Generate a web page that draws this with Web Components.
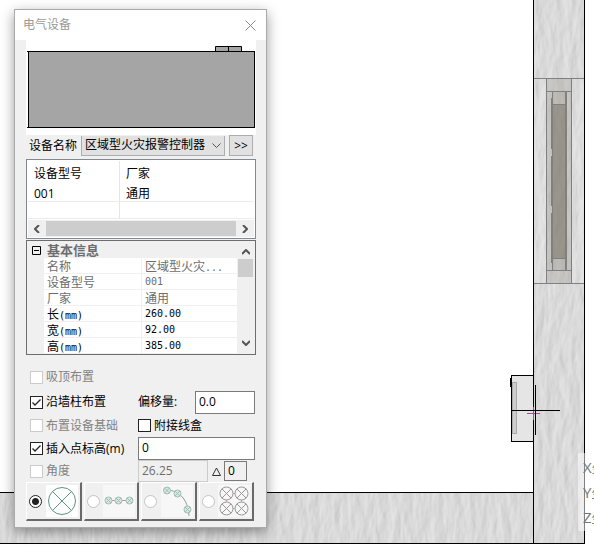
<!DOCTYPE html>
<html lang="zh-CN">
<head>
<meta charset="utf-8">
<title>电气设备</title>
<style>
body { margin: 0; background: #fff; font: 12px/16px "Open Sans", "Noto Sans CJK SC", sans-serif; color: #000; }
</style>
</head>
<body>
<plan-canvas>
  <coord-readout slot="overlay"></coord-readout>
  <tool-dialog slot="overlay" heading="电气设备">
    <device-preview></device-preview>
    <device-picker></device-picker>
    <device-list></device-list>
    <property-grid></property-grid>
    <placement-options></placement-options>
    <layout-modes></layout-modes>
  </tool-dialog>
</plan-canvas>
<script>
function define(name, html) {
  const t = document.createElement('template');
  t.innerHTML = '<style>:host,*{box-sizing:border-box}input,select,button{font:inherit;color:inherit;margin:0;border-radius:0}</style>' + html;
  customElements.define(name, class extends HTMLElement {
    constructor() {
      super();
      this.attachShadow({ mode: 'open' }).append(t.content.cloneNode(true));
    }
    connectedCallback() {
      const h = this.shadowRoot.querySelector('[data-heading]');
      if (h) h.textContent = this.getAttribute('heading');
    }
  });
}

define('plan-canvas', `
<style>
:host { display: block; position: relative; min-height: 100vh; overflow: hidden; }
.plan { position: absolute; left: 0; top: 0; }
</style>
<svg class="plan" width="594" height="550" viewBox="0 0 594 550" aria-hidden="true">
  <defs>
    <filter id="plaster" x="0" y="0" width="100%" height="100%" color-interpolation-filters="sRGB">
      <feTurbulence type="fractalNoise" baseFrequency="0.12 0.04" numOctaves="3" seed="4" result="n"/>
      <feColorMatrix in="n" values="0 0 0 0 0  0 0 0 0 0  0 0 0 0 0  1 0 0 0 0"/>
      <feDiffuseLighting surfaceScale="0.5" diffuseConstant="1" lighting-color="#eeeeee">
        <feDistantLight azimuth="200" elevation="66"/>
      </feDiffuseLighting>
    </filter>
  </defs>
  <rect x="533" y="0" width="51" height="543" filter="url(#plaster)"/>
  <rect x="0" y="492" width="533" height="51" filter="url(#plaster)"/>
  <g fill="none" stroke="#000">
    <path d="M533.5 0V543M584.5 0V543.5M0 492.5H533M0 543.5H585"/>
  </g>
  <rect x="534" y="79" width="50" height="204" fill="#fff" opacity=".12"/>
  <g fill="#8a8074">
    <rect x="547" y="79" width="25" height="204" opacity=".28"/>
    <rect x="553" y="92" width="13" height="178" opacity=".16"/>
    <rect x="553" y="105" width="13" height="153" fill="#665f50" opacity=".42"/>
  </g>
  <path d="M534 78.500H584M534 283.500H584M533.500 79V283M584.500 79V283M546.500 79V283M571.500 79V283M547 91.500H571M547 270.500H571M552 104.500H566M552 258.500H566" stroke="#808080" fill="none"/>
  <path d="M533.500 79V283M584.500 79V283" stroke="#000"/>
  <path d="M552.500 92V270" stroke="#808080"/>
  <path d="M566 92V270" stroke="#808080" stroke-width="2"/>
  <path d="M551.500 98V149M551.500 156V206M551.500 213V263" stroke="#808080"/>
  <rect x="511.500" y="375.500" width="22" height="66" fill="#e5e5e5" stroke="#000"/>
  <rect x="512.500" y="382.500" width="4" height="51" fill="#cdcdcd" stroke="#aaa"/>
  <path d="M511 378V387" stroke="#000" stroke-width="2"/>
  <path d="M527 413.500H540M533.500 407V420" stroke="#a349a4"/>
  <path d="M512 410.500H560M535.500 385V435" stroke="#000"/>
</svg>
<slot name="overlay"></slot>`);

define('coord-readout', `
<style>
:host { position: absolute; left: 578px; top: 453px; width: 120px; padding: 2px 5px 1px; background: #ffffff80; color: #777; font-size: 15px; line-height: 25px; }
div { white-space: nowrap; }
</style>
<div>X坐标</div><div>Y坐标</div><div>Z坐标</div>`);

define('tool-dialog', `
<style>
:host { position: absolute; left: 14px; top: 9px; width: 253px; padding-bottom: 6px; background: #f0f0f0; border: 1px solid #aaa; box-shadow: 0 4px 12px #0006; }
header { display: flex; align-items: center; justify-content: space-between; height: 30px; padding: 0 10px 0 8px; background: #fff; color: #999; }
h1 { margin: 0; font: inherit; }
button { display: flex; padding: 0; border: 0; background: none; color: #888; }
main { padding: 0 10px 0 11px; }
</style>
<header><h1 data-heading></h1>
<button type="button" aria-label="关闭"><svg width="11" height="11"><path d="M.5 .5L10.500 10.500M10.500 .5L.5 10.500" stroke="currentColor"/></svg></button></header>
<main><slot></slot></main>`);

define('device-preview', `
<style>:host { display: block; background: #fff; height: 95px; } svg { display: block; }</style>
<svg width="230" height="95" role="img" aria-label="设备预览">
  <path d="M189.500 11.500V6.500H215.500V11.500M202.500 6V11" fill="#a5a5a5" stroke="#000"/>
  <rect x="2.500" y="11.500" width="226" height="76" fill="#a5a5a5" stroke="#000"/>
  <path d="M1 11.500H3M1 87.500H3" stroke="#000"/>
</svg>`);

define('device-picker', `
<style>
:host { display: flex; align-items: center; gap: 4px; height: 21px; padding-left: 3px; }
.pick { position: relative; flex: 1; }
select { display: block; width: 100%; height: 20px; padding: 0 3px; appearance: none; background: #e1e1e1; border: 1px solid #adadad; border-top: 0; }
svg { position: absolute; right: 4px; top: 7px; pointer-events: none; }
button { width: 24px; height: 21px; margin-right: 3px; padding: 0; background: #e1e1e1; border: 1px solid #adadad; line-height: 18px; }
</style>
<label for="d">设备名称</label>
<span class="pick"><select id="d"><option>区域型火灾报警控制器</option></select>
<svg width="9" height="6"><path d="M.5 .5L4.500 4.500L8.500 .5" fill="none" stroke="#555"/></svg></span>
<button type="button">&gt;&gt;</button>`);

define('device-list', `
<style>
:host { display: block; margin-top: 3px; border: 1px solid #828790; background: #fff; padding: 1px; height: 80px; }
table { width: 100%; border-collapse: separate; border-spacing: 0; table-layout: fixed; line-height: 14px; }
th { height: 24px; font-weight: normal; text-align: left; }
th, td { padding: 2px 5px 0 6px; }
th:first-child, td:first-child { width: 92px; border-right: 1px solid #e5e5e5; }
td { height: 17px; border-bottom: 1px solid #ececec; }
.bar { display: flex; align-items: center; justify-content: space-between; height: 17px; margin-top: 1px; background: #f0f0f0; }
.thumb { flex: 1; height: 15px; background: #cdcdcd; }
button { display: flex; justify-content: center; width: 18px; padding: 0; border: 0; background: none; }
</style>
<table>
<tr><th>设备型号</th><th>厂家</th></tr>
<tr><td>001</td><td>通用</td></tr>
<tr><td></td><td></td></tr>
</table>
<div class="bar">
<button type="button" aria-label="向左"><svg width="6" height="8"><path d="M5 0L1 4L5 8" fill="none" stroke="#555" stroke-width="2"/></svg></button>
<span class="thumb"></span>
<button type="button" aria-label="向右"><svg width="6" height="8"><path d="M1 0L5 4L1 8" fill="none" stroke="#555" stroke-width="2"/></svg></button>
</div>`);

define('property-grid', `
<style>
:host { display: flex; height: 115px; margin-top: 1px; padding: 1px; border: 1px solid #6d6d6d; background: #f0f0f0; color: #6d6d6d; }
.grid { flex: 1; }
h2 { display: flex; align-items: center; gap: 6px; height: 16px; margin: 0; padding-left: 4px; font: bold 13px/16px "Noto Sans CJK SC", sans-serif; }
h2 button { display: flex; padding: 0; border: 0; background: none; }
table { width: 100%; border-collapse: separate; border-spacing: 0; table-layout: fixed; font-family: "Noto Sans CJK SC", sans-serif; line-height: 15px; }
td { height: 16px; padding: 0 3px; background: #fff; border-bottom: 1px solid #f0f0f0; white-space: nowrap; }
.grid div { padding-left: 16px; }
td:first-child { width: 98px; border-right: 1px solid #f0f0f0; }
.edit { color: #000; }
.m { font-family: "DejaVu Sans Mono", monospace; font-size: 10px; }
span.m { line-height: 10px; }
.bar { display: flex; flex-direction: column; align-items: center; width: 17px; padding: 3px 1px; background: #f0f0f0; }
.bar button { display: flex; align-items: center; height: 14px; padding: 0; border: 0; background: none; }
.thumb { width: 15px; height: 18px; margin-bottom: auto; background: #cdcdcd; }
</style>
<section class="grid">
<h2><button type="button" aria-label="折叠"><svg width="9" height="9"><path d="M.5 .5H8.500V8.500H.5ZM2 4.500H7" fill="none" stroke="#000"/></svg></button>基本信息</h2>
<div><table>
<tr><td>名称</td><td>区域型火灾<span class="m">...</span></td></tr>
<tr><td>设备型号</td><td class="m">001</td></tr>
<tr><td>厂家</td><td>通用</td></tr>
<tr class="edit"><td>长<span class="m">(mm)</span></td><td class="m">260.00</td></tr>
<tr class="edit"><td>宽<span class="m">(mm)</span></td><td class="m">92.00</td></tr>
<tr class="edit"><td>高<span class="m">(mm)</span></td><td class="m">385.00</td></tr>
</table></div>
</section>
<div class="bar">
<button type="button" aria-label="向上"><svg width="8" height="6"><path d="M0 5L4 1L8 5" fill="none" stroke="#555" stroke-width="2"/></svg></button>
<span class="thumb"></span>
<button type="button" aria-label="向下"><svg width="8" height="6"><path d="M0 1L4 5L8 1" fill="none" stroke="#555" stroke-width="2"/></svg></button>
</div>`);

define('placement-options', `
<style>
:host { display: grid; grid-template-columns: 108px 1fr; grid-template-rows: 26px 24px 23px 23px 22px; align-items: center; margin-top: 9px; padding: 0 1px 0 4px; }
label, .field { display: flex; align-items: center; gap: 3px; white-space: nowrap; }
.off { color: #838383; }
input[type=checkbox] { appearance: none; flex: none; width: 13px; height: 13px; background: #fff; border: 1px solid #222; }
input[type=checkbox]:checked { background: #fff url("data:image/svg+xml,%3Csvg xmlns='http://www.w3.org/2000/svg' width='11' height='11'%3E%3Cpath d='M1.500 5.500L4 8L9.500 2.500' fill='none' stroke='%23222' stroke-width='1.300'/%3E%3C/svg%3E"); }
input[type=checkbox]:disabled { border-color: #ccc; }
input[type=text] { min-width: 0; width: 100%; height: 23px; padding: 0 3px 2px; border: 1px solid #7a7a7a; background: #fff; }
input[type=text]:disabled { height: 22px; background: #f0f0f0; border-color: #ccc; color: #6d6d6d; }
.field { justify-content: space-between; }
.field input.offset { width: 60px; }
.field input.angle { width: 70px; }
.field input.delta { width: 23px; height: 20px; margin-right: 8px; background: #f0f0f0; }
.low { align-self: start; }
</style>
<label class="off"><input type="checkbox" disabled>吸顶布置</label><span></span>
<label><input type="checkbox" checked>沿墙柱布置</label>
<div class="field"><label for="o">偏移量:</label><input class="offset" id="o" type="text" value="0.0"></div>
<label class="off"><input type="checkbox" disabled>布置设备基础</label>
<label><input type="checkbox">附接线盒</label>
<label><input id="hc" type="checkbox" checked>插入点标高(m)</label>
<div class="field"><input type="text" value="0" aria-label="插入点标高"></div>
<label class="off"><input type="checkbox" disabled>角度</label>
<div class="field"><input class="angle" type="text" value="26.25" disabled aria-label="角度"><label for="dl"><svg width="9" height="9"><path d="M4.500 1L8.500 8.500H.5Z" fill="none" stroke="#333"/></svg></label><input class="delta" id="dl" type="text" value="0"></div>`);

define('layout-modes', `
<style>
:host { display: grid; grid-template-columns: repeat(4, 1fr); gap: 2px; padding-right: 2px; }
label { display: flex; align-items: center; justify-content: space-between; height: 39px; padding: 0 2px; border: 1px solid; border-width: 1px 2px 2px 1px; border-color: #fff #696969 #696969 #fff; }
input { appearance: none; flex: none; width: 13px; height: 13px; background: #fff; border: 1px solid #c4c4c4; border-radius: 50%; }
input:checked { border-color: #222; background: radial-gradient(circle, #222 0 3px, #fff 4px); }
svg { background: #f7f7f7; fill: none; }
.defs { position: absolute; }
.single { background: #fff; }
</style>
<svg class="defs" width="0" height="0"><defs>
<g id="lamp"><circle r="3.500"/><path d="M-2.500-2.500L2.500 2.500M2.500-2.500L-2.500 2.500"/></g>
<g id="big"><circle r="6.500"/><path d="M-4.600-4.600L4.600 4.600M4.600-4.600L-4.600 4.600"/></g>
</defs></svg>
<label><input type="radio" name="m" checked aria-label="单个布置"><svg class="single" width="32" height="32" stroke="#5c9482"><circle cx="16" cy="16" r="13.500"/><path d="M6.500 6.500L25.500 25.500M25.500 6.500L6.500 25.500"/></svg></label>
<label><input type="radio" name="m" aria-label="直线布置"><svg width="32" height="32" stroke="#9dbfb4"><path d="M9 15.500H12M19 15.500H23" stroke="#e08a86"/><g fill="#d9e8e3"><use href="#lamp" x="5.500" y="15.500"/><use href="#lamp" x="15.500" y="15.500"/><use href="#lamp" x="26.500" y="15.500"/></g></svg></label>
<label><input type="radio" name="m" aria-label="弧线布置"><svg width="32" height="32" stroke="#9dbfb4"><path d="M2 5C18 4 27 14 28 31" stroke="#999"/><g fill="#d9e8e3"><use href="#lamp" x="6" y="5.500"/><use href="#lamp" x="16.500" y="8.500"/><use href="#lamp" x="26.500" y="24.500"/></g></svg></label>
<label><input type="radio" name="m" aria-label="矩形布置"><svg width="32" height="32" stroke="#999"><path d="M8.500 8.500H23.500V23.500H8.500Z" stroke="#e2a29e"/><g fill="#f7f7f7"><use href="#big" x="8.500" y="8.500"/><use href="#big" x="23.500" y="8.500"/><use href="#big" x="8.500" y="23.500"/><use href="#big" x="23.500" y="23.500"/></g></svg></label>`);
</script>
</body>
</html>
